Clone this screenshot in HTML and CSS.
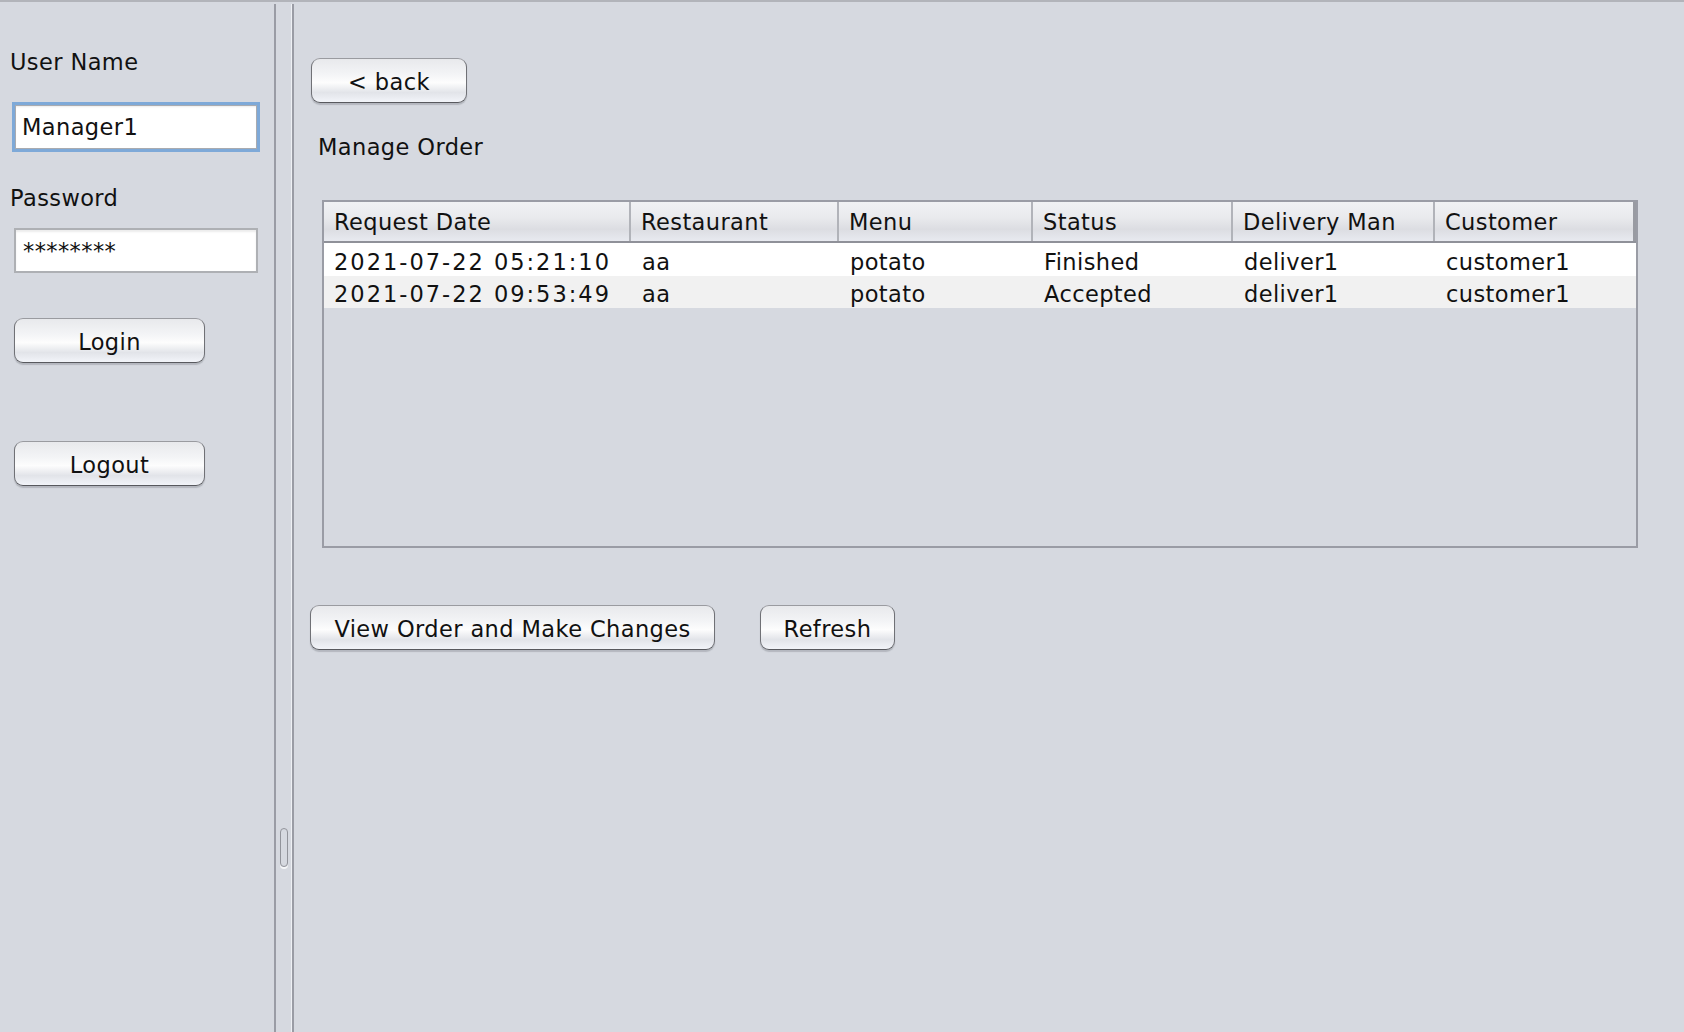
FILE: index.html
```html
<!DOCTYPE html>
<html lang="en">
<head>
<meta charset="utf-8">
<title>Manage Order</title>
<link rel="stylesheet" href="styles.css">
</head>
<body>
<div class="window">
  <aside class="sidebar">
    <div class="label">User Name</div>
    <div class="field field-focus">Manager1</div>
    <div class="label label-pwd">Password</div>
    <div class="field field-pwd">********</div>
    <button class="btn btn-side btn-login">Login</button>
    <button class="btn btn-side btn-logout">Logout</button>
  </aside>
  <div class="divider"><div class="handle"></div></div>
  <main class="main">
    <button class="btn btn-back">&lt; back</button>
    <div class="title">Manage Order</div>
    <div class="table">
      <div class="thead">
        <div class="th">Request Date</div>
        <div class="th">Restaurant</div>
        <div class="th">Menu</div>
        <div class="th">Status</div>
        <div class="th">Delivery Man</div>
        <div class="th th-last">Customer</div>
      </div>
      <div class="tr tr-odd">
        <div class="td td-date">2021-07-22 05:21:10</div>
        <div class="td">aa</div>
        <div class="td">potato</div>
        <div class="td">Finished</div>
        <div class="td">deliver1</div>
        <div class="td">customer1</div>
      </div>
      <div class="tr tr-even">
        <div class="td td-date">2021-07-22 09:53:49</div>
        <div class="td">aa</div>
        <div class="td">potato</div>
        <div class="td">Accepted</div>
        <div class="td">deliver1</div>
        <div class="td">customer1</div>
      </div>
    </div>
    <div class="actions">
      <button class="btn btn-view">View Order and Make Changes</button>
      <button class="btn btn-refresh">Refresh</button>
    </div>
  </main>
</div>
</body>
</html>
```

FILE: styles.css
```css
* { box-sizing: border-box; }
html, body {
  margin: 0;
  padding: 0;
}
body {
  width: 1684px;
  height: 1032px;
  overflow: hidden;
  background: #d6d9e0;
  font-family: "DejaVu Sans", "Liberation Sans", sans-serif;
  font-size: 22.5px;
  letter-spacing: 0.4px;
  color: #111;
}
.window {
  display: flex;
  height: 1032px;
  border-top: 2px solid #b2b4ba;
}
.sidebar {
  width: 274px;
  flex: none;
  display: flex;
  flex-direction: column;
  align-items: flex-start;
  padding-top: 47px;
}
.label {
  line-height: 26px;
  height: 26px;
  margin-left: 10px;
}
.label-pwd { margin-top: 33px; }
.field {
  background: #fff;
  line-height: 26px;
}
.field-focus {
  margin-top: 27px;
  margin-left: 12px;
  width: 248px;
  height: 50px;
  border: 3px solid #7ea9d8;
  box-shadow: inset 0 0 0 1px #a9abb0, inset 0 2px 2px rgba(0,0,0,0.08);
  padding: 9px 0 0 7px;
}
.field-pwd {
  margin-top: 17px;
  margin-left: 14px;
  width: 244px;
  height: 45px;
  border: 2px solid #aeb0b4;
  box-shadow: inset 0 2px 2px rgba(0,0,0,0.08);
  padding: 8px 0 0 7px;
  letter-spacing: 0.4px;
}
.btn {
  font-family: inherit;
  font-size: 22.5px;
  letter-spacing: 0.4px;
  color: #111;
  height: 45px;
  line-height: 26px;
  padding: 3px 0 0 0;
  border: 1.5px solid #707176;
  border-top-color: #9a9ba0;
  border-bottom-color: #58595e;
  border-radius: 9px;
  background: linear-gradient(to bottom, #e8e9ec 0%, #f3f4f6 35%, #fdfdfd 55%, #e2e4e9 78%, #f2f4f9 100%);
  box-shadow: 0 2px 1px rgba(80,82,90,0.25);
  display: flex;
  align-items: center;
  justify-content: center;
  cursor: default;
}
.btn-side {
  width: 191px;
  margin-left: 14px;
}
.btn-login { margin-top: 45px; }
.btn-logout { margin-top: 78px; }
.divider {
  width: 20px;
  flex: none;
  border-left: 2px solid #9a9ca5;
  border-right: 2px solid #9a9ca5;
  box-shadow: inset -1px 0 0 #eef0f4;
  margin-top: 2px;
  padding-top: 824px;
  padding-left: 4px;
}
.handle {
  width: 8px;
  height: 39px;
  border: 1.5px solid #92949b;
  border-radius: 4px;
  box-shadow: 0 2px 0 #f6f7f9;
}
.main {
  flex: 1;
  display: flex;
  flex-direction: column;
  align-items: flex-start;
  padding-top: 56px;
  padding-left: 16px;
}
.btn-back {
  width: 156px;
  margin-left: 1px;
}
.title {
  margin-top: 31px;
  margin-left: 8px;
  line-height: 26px;
  height: 26px;
}
.table {
  margin-top: 40px;
  margin-left: 12px;
  width: 1316px;
  height: 348px;
  border: 2px solid #9a9ca5;
}
.thead, .tr {
  display: grid;
  grid-template-columns: 307px 208px 194px 200px 202px 201px;
}
.thead {
  height: 41px;
  border-bottom: 2px solid #8f9199;
  background: linear-gradient(to bottom, #f1f2f4 0%, #e9eaed 40%, #dcdde2 70%, #e8eaf0 100%);
}
.th {
  line-height: 26px;
  padding: 7px 0 0 10px;
  border-right: 2px solid #b1b3b9;
  white-space: nowrap;
}
.th-last {
  border-right: 3px solid #999ba2;
}
.tr {
  height: 32.5px;
}
.tr-odd { background: #ffffff; }
.tr-even { background: #f1f1f1; }
.td {
  line-height: 26px;
  padding: 5.5px 0 0 11px;
  white-space: nowrap;
}
.td-date {
  padding-left: 10px;
  letter-spacing: 2px;
}
.actions {
  margin-top: 57px;
  display: flex;
  gap: 45px;
}
.btn-view { width: 405px; }
.btn-refresh { width: 135px; }
```
